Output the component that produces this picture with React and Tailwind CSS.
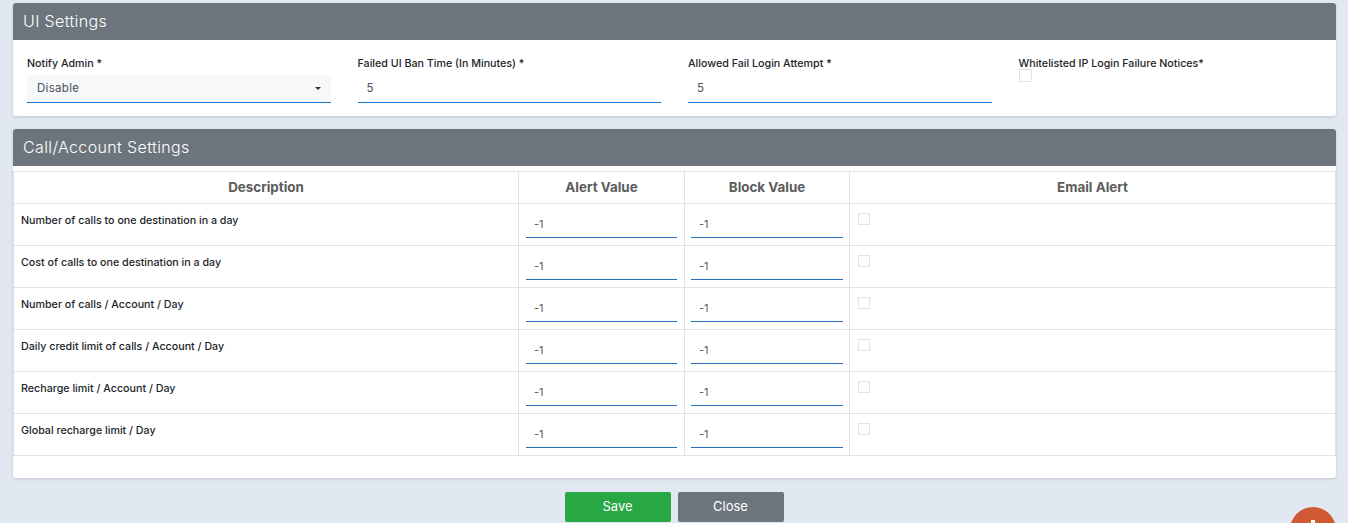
import React from "react"

const rows = [
  "Number of calls to one destination in a day",
  "Cost of calls to one destination in a day",
  "Number of calls / Account / Day",
  "Daily credit limit of calls / Account / Day",
  "Recharge limit / Account / Day",
  "Global recharge limit / Day",
]

function CardHeader({ title }) {
  return (
    <div className="h-[37px] rounded-t-[3px] bg-[#6c757d] pl-[10px] text-[16px] leading-[37px] font-light tracking-[0.37px] text-white">
      {title}
    </div>
  )
}

function Field({ label, value }) {
  return (
    <div>
      <label className="mb-[2px] block h-[19px] text-[10.7px] leading-[19px] font-medium text-[#212529]">{label}</label>
      <input
        readOnly
        value={value}
        className="block h-[28px] w-full border-b border-[#1976d2] pb-[2px] pl-[9px] text-[11.5px] tracking-[0.3px] text-[#495057] outline-none"
      />
    </div>
  )
}

function Check() {
  return <input type="checkbox" readOnly className="block h-[12px] w-[12px] appearance-none border border-[#e4e4e4] bg-white" />
}

function TableInput() {
  return (
    <input
      readOnly
      value="-1"
      className="block h-[28px] w-full border-b border-[#2a6ebb] pl-[8px] text-[11px] text-[#6b5a4c] outline-none"
    />
  )
}

export default function App() {
  return (
    <div className="relative h-[523px] overflow-hidden bg-[#e1e8f2] pt-[3px] pr-[12px] pl-[13px] font-['Inter','Liberation_Sans',sans-serif]">

      {/* UI Settings */}
      <div className="rounded-[3px] bg-white shadow-[0_1px_3px_rgba(0,0,0,0.15)]">
        <CardHeader title="UI Settings" />
        <div className="grid h-[76px] grid-cols-4 gap-x-[27px] px-[14px] pt-[14px]">
          <div>
            <label className="mb-[2px] block h-[19px] text-[10.7px] leading-[19px] font-medium text-[#212529]">Notify Admin *</label>
            <div className="flex h-[28px] items-center justify-between border-b border-[#1976d2] bg-[#f6f8fa] px-[10px] text-[11.5px] tracking-[0.3px] text-[#495057]">
              <span>Disable</span>
              <span className="h-0 w-0 border-x-[3px] border-t-[3px] border-x-transparent border-t-[#333]"></span>
            </div>
          </div>
          <Field label="Failed UI Ban Time (In Minutes) *" value="5" />
          <Field label="Allowed Fail Login Attempt *" value="5" />
          <div>
            <label className="block h-[15px] text-[10.7px] leading-[19px] font-medium text-[#212529]">Whitelisted IP Login Failure Notices*</label>
            <input type="checkbox" readOnly className="block h-[13px] w-[13px] appearance-none border border-[#e4e4e4] bg-white" />
          </div>
        </div>
      </div>

      {/* Call/Account Settings */}
      <div className="mt-[13px] h-[349px] rounded-[3px] bg-white shadow-[0_1px_3px_rgba(0,0,0,0.15)]">
        <CardHeader title="Call/Account Settings" />
        <div className="pt-[5px]">
          <table className="w-full table-fixed border-collapse border border-[#dee2e6]">
            <colgroup>
              <col className="w-[505px]" />
              <col className="w-[166px]" />
              <col className="w-[165px]" />
              <col />
            </colgroup>
            <thead>
              <tr className="h-[32px] text-center text-[13.4px] leading-[20px] font-bold text-[#5c5c5c]">
                <th className="border border-[#dee2e6] pb-[2px]">Description</th>
                <th className="border border-[#dee2e6] pb-[2px]">Alert Value</th>
                <th className="border border-[#dee2e6] pb-[2px]">Block Value</th>
                <th className="border border-[#dee2e6] pb-[2px]">Email Alert</th>
              </tr>
            </thead>
            <tbody>
              {rows.map(row => (
                <tr key={row} className="h-[42px]">
                  <td className="border border-[#dee2e6] pt-[9px] pr-[8px] pl-[7px] align-top text-[10.7px] leading-[16px] font-medium text-[#212529]">{row}</td>
                  <td className="border border-[#dee2e6] px-[7px] pb-[7px] align-bottom"><TableInput /></td>
                  <td className="border border-[#dee2e6] px-[6px] pb-[7px] align-bottom"><TableInput /></td>
                  <td className="border border-[#dee2e6] px-[8px] pt-[9px] align-top"><Check /></td>
                </tr>
              ))}
            </tbody>
          </table>
        </div>
      </div>

      {/* Buttons */}
      <div className="mt-[14px] flex justify-center gap-[7px] pr-[1px]">
        <button className="h-[30px] w-[106px] rounded-[2px] bg-[#28a745] text-[13px] text-white">Save</button>
        <button className="h-[30px] w-[106px] rounded-[2px] bg-[#6c757d] text-[13px] text-white">Close</button>
      </div>

      {/* floating add button */}
      <div className="absolute top-[507px] left-[1290px] h-[46px] w-[46px] rounded-full bg-[#cf5a33]">
        <div className="absolute top-[13px] left-[21px] h-[20px] w-[4px] bg-white"></div>
      </div>
    </div>
  )
}
